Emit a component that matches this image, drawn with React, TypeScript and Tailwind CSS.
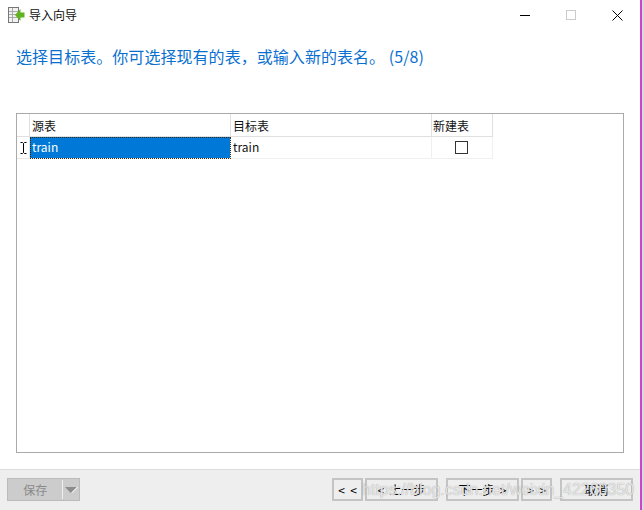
const cjk = 'font-["Noto_Sans_CJK_SC","Liberation_Sans",sans-serif]';

function NavButton({ label, className }: { label: string; className: string }) {
  return (
    <button className={`h-[23px] border-2 border-[#c4c4c4] bg-[#eeeeee] text-[12px] text-black flex items-center justify-center whitespace-pre ${className}`}>
      {label}
    </button>
  );
}

export default function App() {
  return (
    <div className={`w-[644px] h-[510px] overflow-hidden flex bg-white ${cjk}`}>
      <div className="w-[640px] h-full flex flex-col">
        {/* Title bar */}
        <div className="h-[30px] flex items-center pl-[8px] shrink-0">
          <svg width="17" height="16" viewBox="0 0 17 16" className="shrink-0">
            <rect x="0.5" y="0.5" width="10" height="15" fill="#f2f2f2" stroke="#777" />
            <path d="M1 4.5h9M1 7.5h9M1 10.5h9M4.5 1v14" stroke="#aaa" fill="none" />
            <path d="M16.5 5.5h-4V2L7 8l5.5 6v-3.5h4z" fill="#5fb31f" />
          </svg>
          <span className="ml-[4px] text-[12px] text-[#111]">导入向导</span>
          <div className="ml-auto flex items-center">
            <svg width="11" height="11" viewBox="0 0 11 11" className="mr-[35px]">
              <path d="M0 5.5h10" stroke="#000" />
            </svg>
            <svg width="11" height="11" viewBox="0 0 11 11" className="mr-[35px]">
              <rect x="0.5" y="0.5" width="9" height="9" fill="none" stroke="#ccc" />
            </svg>
            <svg width="11" height="11" viewBox="0 0 11 11" className="mr-[17px]">
              <path d="M0.5 0.5l10 10M10.5 0.5l-10 10" stroke="#000" />
            </svg>
          </div>
        </div>

        {/* Step heading */}
        <div className="pl-[16px] pt-[15px] h-[83px] shrink-0 text-[16px] leading-[23px] tracking-[0.05px] text-[#0a70d0]">
          选择目标表。你可选择现有的表，或输入新的表名。 (5/8)
        </div>

        {/* Mapping table */}
        <div className="ml-[16px] w-[608px] h-[340px] border border-[#aaaaaa] shrink-0 text-[12px] text-[#111]">
          <div className="grid grid-cols-[13px_201px_201px_61px] grid-rows-[23px_22px] w-max">
            <div className="border-r border-b border-[#e0e0e0]" />
            <div className="border-r border-b border-[#e0e0e0] pl-[2px] pt-[1px] flex items-center">源表</div>
            <div className="border-r border-b border-[#e0e0e0] pl-[2px] pt-[1px] flex items-center">目标表</div>
            <div className="border-r border-b border-[#e0e0e0] pl-[1px] pt-[1px] flex items-center">新建表</div>
            <div className="border-r border-b border-[#e8e8e8] flex items-center justify-center">
              <svg width="7" height="12" viewBox="0 0 7 12">
                <path d="M0.5 0.5h2l1 1 1-1h2M3.5 1.5v9M0.5 11.5h2l1-1 1 1h2" stroke="#000" fill="none" />
              </svg>
            </div>
            <div className="border-r border-b border-[#f0f0f0] bg-[#0078d7] text-white pl-[2px] pb-[1px] flex items-center outline-1 outline-dotted -outline-offset-1 outline-[#3a2a10]">train</div>
            <div className="border-r border-b border-[#f0f0f0] pl-[2px] pb-[1px] flex items-center">train</div>
            <div className="border-r border-b border-[#f0f0f0] pr-[1px] flex items-center justify-center">
              <span className="w-[13px] h-[13px] border border-[#333] bg-white" />
            </div>
          </div>
        </div>

        {/* Footer */}
        <div className="mt-[16px] flex-1 bg-[#eeeeee] border-t border-[#dddddd] relative flex items-start pt-[8px] pl-[7px]">
          <div className="w-[73px] h-[23px] bg-[#cccccc] border border-[#bbbbbb] flex items-center">
            <span className="w-[56px] text-center text-[12px] text-[#8a8a8a]">保存</span>
            <span className="w-[1px] h-[19px] bg-[#f0f0f0]" />
            <svg width="15" height="8" viewBox="0 0 15 8" className="ml-[1px]">
              <path d="M1 1h12L7 7z" fill="#8c8c8c" />
              <path d="M8 7l6-6" stroke="#ffffff" />
            </svg>
          </div>
          <div className="ml-auto mr-[7px] flex">
            <NavButton label="<  <" className="w-[31px] mr-[2px]" />
            <NavButton label="<  上一步" className="w-[73px] mr-[8px]" />
            <NavButton label="下一步  >" className="w-[73px] mr-[2px]" />
            <NavButton label=">  >" className="w-[31px] mr-[8px]" />
            <NavButton label="取消" className="w-[73px]" />
          </div>
          {/* Watermark */}
          <span className="absolute left-[362px] top-[7px] text-[16px] leading-[26px] whitespace-nowrap text-white/75 [text-shadow:0_0_1px_#8a8a8a] font-['Liberation_Sans',sans-serif]">
            https://blog.csdn.net/weixin_42260350
          </span>
        </div>
      </div>

      {/* Neighbouring window edge */}
      <div className="w-[2px] h-full bg-[#cc44cc]" />
      <div className="flex-1 h-full bg-[#dadada]" />
    </div>
  );
}
